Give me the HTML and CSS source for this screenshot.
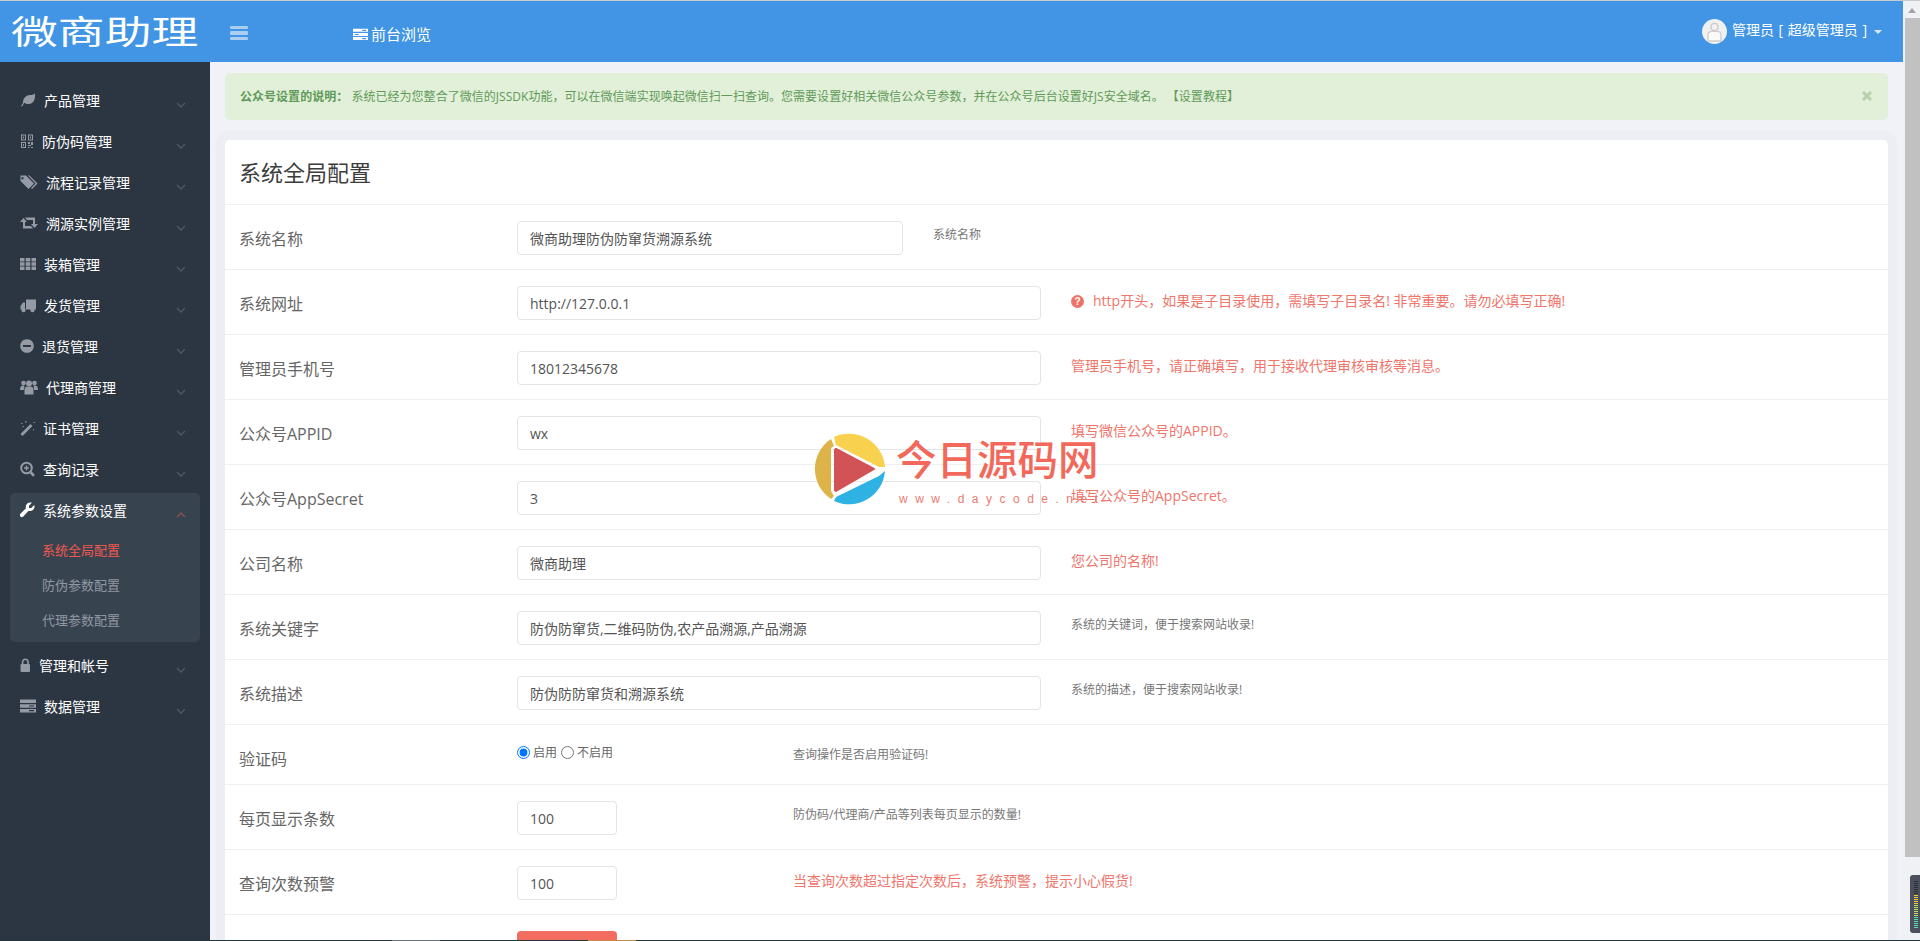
FILE: index.html
```html
<!DOCTYPE html>
<html lang="zh-CN">
<head>
    <meta charset="UTF-8">
    <title>系统全局配置</title>
    <link rel="stylesheet" href="styles.css">
</head>
<body>
<div class="window">
    <div class="main">
        <div class="header">
            <div class="logo"><span>微商助理</span></div>
            <div class="hamburger"><i></i><i></i><i></i></div>
            <a class="browse">
                <svg width="15" height="16" viewBox="0 0 16 16" fill="currentColor" fill-rule="evenodd"><path d="M0 2.5h16v3.2H0z M10 3.5h4v1.2h-4z M0 6.9h16v3.2H0z M2 8h4v1H2z M0 11.3h16v3.2H0z M10 12.3h4v1.2h-4z"/></svg>
                前台浏览
            </a>
            <div class="user">
                <svg class="avatar" width="25" height="25" viewBox="0 0 25 25"><circle cx="12.5" cy="12.5" r="12.5" fill="#f1f1f1"/><circle cx="12.5" cy="8" r="3.6" fill="none" stroke="#c9c9c9" stroke-width="1.4"/><path d="M6 22v-6c0-2.5 2-3.6 4-3.6h5c2 0 4 1.1 4 3.6v6z" fill="#fafafa" stroke="#cfcfcf" stroke-width="1.4"/></svg>
                <span class="user-name">管理员 [ 超级管理员 ]</span>
                <i class="caret"></i>
            </div>
        </div>
        <div class="body">
            <div class="sidebar">
                <ul class="menu">
                    <li class="menu-item">
                        <svg width="16" height="16" viewBox="0 0 16 16" fill="currentColor"><path d="M1 14.5c.3-1.2 1-2.4 2-3.5C2.6 6 6.5 3 10 3c2.5 0 4-.6 5-1.5.4 4.5-.6 10.5-6.5 10.5-1.8 0-3.2-.4-4.3-1.2-.7.9-1.2 1.9-1.4 3z"/></svg>
                        <span>产品管理</span>
                        <svg class="chevron" width="10" height="6" viewBox="0 0 10 6"><polyline points="1,1 5,5 9,1"/></svg>
                    </li>
                    <li class="menu-item">
                        <svg width="14" height="16" viewBox="0 0 14 16" fill="currentColor" fill-rule="evenodd"><path d="M1 1.5h5v6H1z M2 2.5v4h3v-4z M3 3.5h1v2H3z M8 1.5h5v6H8z M9 2.5v4h3v-4z M10 3.5h1v2h-1z M1 9h5v6H1z M2 10v4h3v-4z M3 11h1v2H3z M8 9h2v2H8z M11 9h2v3h-2z M8 12h3v1H8z M8 14h1.500v1H8z M11 14h2v1h-2z"/></svg>
                        <span>防伪码管理</span>
                        <svg class="chevron" width="10" height="6" viewBox="0 0 10 6"><polyline points="1,1 5,5 9,1"/></svg>
                    </li>
                    <li class="menu-item">
                        <svg width="18" height="16" viewBox="0 0 18 16" fill="currentColor" fill-rule="evenodd"><path d="M.5 1.500h5.500l8 8-5.500 5.500-8-8z M2.500 3a1.200 1.200 0 1 0 .01 0z M8 1.500h1.500l8 8-5.500 5.500-1-1 4.500-4.500z"/></svg>
                        <span>流程记录管理</span>
                        <svg class="chevron" width="10" height="6" viewBox="0 0 10 6"><polyline points="1,1 5,5 9,1"/></svg>
                    </li>
                    <li class="menu-item">
                        <svg width="18" height="16" viewBox="0 0 18 16" fill="currentColor"><path d="M3.500 3L7 7H5v4h6l2 2.500H3V7H0z"/><path d="M14.500 13L11 9h2V5H7L5 2.500h10V9h3z"/></svg>
                        <span>溯源实例管理</span>
                        <svg class="chevron" width="10" height="6" viewBox="0 0 10 6"><polyline points="1,1 5,5 9,1"/></svg>
                    </li>
                    <li class="menu-item">
                        <svg width="16" height="16" viewBox="0 0 16 16" fill="currentColor"><path d="M0 2h4.500v3.500H0z M5.700 2h4.600v3.500H5.700z M11.500 2H16v3.500h-4.500z M0 6.300h4.500v3.500H0z M5.700 6.300h4.600v3.500H5.700z M11.500 6.300H16v3.500h-4.500z M0 10.600h4.500v3.500H0z M5.700 10.600h4.600v3.500H5.700z M11.500 10.600H16v3.500h-4.500z"/></svg>
                        <span>装箱管理</span>
                        <svg class="chevron" width="10" height="6" viewBox="0 0 10 6"><polyline points="1,1 5,5 9,1"/></svg>
                    </li>
                    <li class="menu-item">
                        <svg width="16" height="16" viewBox="0 0 16 16" fill="currentColor"><path d="M6 2.500h10v10H6z"/><path d="M5 5.500v7H.5V9L3 5.500z"/><circle cx="3.500" cy="13" r="2.200"/><circle cx="12.500" cy="13" r="2.200"/></svg>
                        <span>发货管理</span>
                        <svg class="chevron" width="10" height="6" viewBox="0 0 10 6"><polyline points="1,1 5,5 9,1"/></svg>
                    </li>
                    <li class="menu-item">
                        <svg width="14" height="16" viewBox="0 0 14 16" fill="currentColor" fill-rule="evenodd"><path d="M7 1.200a6.800 6.800 0 1 0 .01 0z M3 7h8v2H3z"/></svg>
                        <span>退货管理</span>
                        <svg class="chevron" width="10" height="6" viewBox="0 0 10 6"><polyline points="1,1 5,5 9,1"/></svg>
                    </li>
                    <li class="menu-item">
                        <svg width="18" height="16" viewBox="0 0 18 16" fill="currentColor"><circle cx="3.500" cy="4" r="2.300"/><circle cx="14.500" cy="4" r="2.300"/><circle cx="9" cy="4.500" r="3"/><path d="M0 11c0-3 1-4.500 3-4.500h1.500L3.800 11z M18 11c0-3-1-4.500-3-4.500h-1.500l.7 4.500z M4.500 15.500V10.500c0-2 1.500-3 3-3h3c1.500 0 3 1 3 3v5z"/></svg>
                        <span>代理商管理</span>
                        <svg class="chevron" width="10" height="6" viewBox="0 0 10 6"><polyline points="1,1 5,5 9,1"/></svg>
                    </li>
                    <li class="menu-item">
                        <svg width="15" height="16" viewBox="0 0 15 16" fill="currentColor"><path d="M.5 14l10-10 2 2-10 10z"/><path d="M1 3h1.500v1H1z M5 1h1.500v1.500H5z M2.500 6H4v1H2.500z M13 9h1v1.500h-1z M13.500 2H15v1h-1.500z" opacity=".8"/></svg>
                        <span>证书管理</span>
                        <svg class="chevron" width="10" height="6" viewBox="0 0 10 6"><polyline points="1,1 5,5 9,1"/></svg>
                    </li>
                    <li class="menu-item">
                        <svg width="15" height="16" viewBox="0 0 15 16" fill="none" stroke="currentColor"><circle cx="6.500" cy="7" r="5.300" stroke-width="2"/><path d="M4 7h5M6.500 4.500v5" stroke-width="1.500"/><path d="M10.500 11l3.500 3.800" stroke-width="2.600"/></svg>
                        <span>查询记录</span>
                        <svg class="chevron" width="10" height="6" viewBox="0 0 10 6"><polyline points="1,1 5,5 9,1"/></svg>
                    </li>
                    <li class="menu-panel">
                        <div class="menu-item menu-item-open">
                            <svg width="15" height="16" viewBox="0 0 15 16" fill="currentColor"><path d="M14.500 4.500c0 2.500-2 4.500-4.500 4.500-.5 0-1-.1-1.400-.2L3.300 14.600c-.8.8-2.100.8-2.900 0s-.8-2.100 0-2.900L6 6.300C5.800 5.900 5.700 5.400 5.700 5c0-2.500 2-4.500 4.500-4.500.6 0 1.200.1 1.700.3L9 3.700V6h2.300l2.900-2.900c.2.500.3.900.3 1.400z"/></svg>
                            <span>系统参数设置</span>
                            <svg class="chevron" width="10" height="6" viewBox="0 0 10 6"><polyline points="1,5 5,1 9,5"/></svg>
                        </div>
                        <ul class="submenu">
                            <li class="active">系统全局配置</li>
                            <li>防伪参数配置</li>
                            <li>代理参数配置</li>
                        </ul>
                    </li>
                    <li class="menu-item">
                        <svg width="11" height="16" viewBox="0 0 11 16" fill="currentColor"><rect x=".5" y="7" width="9.500" height="8" rx="1"/><path d="M2.600 7V5a2.700 2.700 0 0 1 5.400 0v2" fill="none" stroke="currentColor" stroke-width="1.600"/></svg>
                        <span>管理和帐号</span>
                        <svg class="chevron" width="10" height="6" viewBox="0 0 10 6"><polyline points="1,1 5,5 9,1"/></svg>
                    </li>
                    <li class="menu-item">
                        <svg width="16" height="16" viewBox="0 0 16 16" fill="currentColor" fill-rule="evenodd"><path d="M0 1.500h16v3.600H0z M0 6.200h16v3.600H0z M9 7.400h5v1.200H9z M0 10.900h16v3.600H0z M9 12.100h5v1.200H9z"/></svg>
                        <span>数据管理</span>
                        <svg class="chevron" width="10" height="6" viewBox="0 0 10 6"><polyline points="1,1 5,5 9,1"/></svg>
                    </li>
                </ul>
            </div>
            <div class="content">
                <div class="alert">
                    <b>公众号设置的说明：</b> 系统已经为您整合了微信的JSSDK功能，可以在微信端实现唤起微信扫一扫查询。您需要设置好相关微信公众号参数，并在公众号后台设置好JS安全域名。<a class="alert-link">【设置教程】</a>
                    <svg class="alert-close" width="10" height="10" viewBox="0 0 10 10"><path d="M1 1l8 8M9 1l-8 8"/></svg>
                </div>
                <div class="card">
                    <div class="card-title">系统全局配置</div>
                    <div class="row">
                        <label>系统名称</label>
                        <div class="field field-mid"><input type="text" value="微商助理防伪防窜货溯源系统"></div>
                        <span class="hint">系统名称</span>
                    </div>
                    <div class="row">
                        <label>系统网址</label>
                        <div class="field"><input type="text" value="http://127.0.0.1"></div>
                        <span class="hint hint-red"><i class="help">?</i>http开头，如果是子目录使用，需填写子目录名! 非常重要。请勿必填写正确!</span>
                    </div>
                    <div class="row">
                        <label>管理员手机号</label>
                        <div class="field"><input type="text" value="18012345678"></div>
                        <span class="hint hint-red">管理员手机号，请正确填写，用于接收代理审核审核等消息。</span>
                    </div>
                    <div class="row">
                        <label>公众号APPID</label>
                        <div class="field"><input type="text" value="wx"></div>
                        <span class="hint hint-red">填写微信公众号的APPID。</span>
                    </div>
                    <div class="row">
                        <label>公众号AppSecret</label>
                        <div class="field"><input type="text" value="3"></div>
                        <span class="hint hint-red">填写公众号的AppSecret。</span>
                    </div>
                    <div class="row">
                        <label>公司名称</label>
                        <div class="field"><input type="text" value="微商助理"></div>
                        <span class="hint hint-red">您公司的名称!</span>
                    </div>
                    <div class="row">
                        <label>系统关键字</label>
                        <div class="field"><input type="text" value="防伪防窜货,二维码防伪,农产品溯源,产品溯源"></div>
                        <span class="hint">系统的关键词，便于搜索网站收录!</span>
                    </div>
                    <div class="row">
                        <label>系统描述</label>
                        <div class="field"><input type="text" value="防伪防防窜货和溯源系统"></div>
                        <span class="hint">系统的描述，便于搜索网站收录!</span>
                    </div>
                    <div class="row row-radio">
                        <label>验证码</label>
                        <div class="field field-small radios">
                            <input type="radio" name="captcha" checked><span>启用</span>
                            <input type="radio" name="captcha"><span>不启用</span>
                        </div>
                        <span class="hint">查询操作是否启用验证码!</span>
                    </div>
                    <div class="row">
                        <label>每页显示条数</label>
                        <div class="field field-small"><input class="input-small" type="text" value="100"></div>
                        <span class="hint">防伪码/代理商/产品等列表每页显示的数量!</span>
                    </div>
                    <div class="row">
                        <label>查询次数预警</label>
                        <div class="field field-small"><input class="input-small" type="text" value="100"></div>
                        <span class="hint hint-red">当查询次数超过指定次数后，系统预警，提示小心假货!</span>
                    </div>
                    <div class="row row-last">
                        <label></label>
                        <div class="field"><button class="btn-submit" type="button"></button></div>
                    </div>
                </div>
            </div>
        </div>
    </div>
    <div class="scrollbar">
        <i class="scroll-arrow"></i>
        <div class="scroll-thumb"></div>
    </div>
</div>

<!-- 水印 -->
<div class="watermark">
    <svg width="74" height="74" viewBox="0 0 74 74">
        <path d="M22 5A36 36 0 0 1 73 35H67L24 13z" fill="#f8d14f"/>
        <path d="M73 39A36 36 0 0 1 22 69L24 65 67 44z" fill="#2eb2e3"/>
        <path d="M19 7L22 14 19 16V59L22 64 19 67A36 36 0 0 1 19 7z" fill="#dcae3c" opacity=".93"/>
        <path d="M24 17 62 37 24 59a1.500 1.500 0 0 1-1-2V19a1.500 1.500 0 0 1 1-2z" fill="#d04a4c" opacity=".95" stroke="#d04a4c" stroke-width="2" stroke-linejoin="round"/>
    </svg>
    <div class="watermark-text">
        <strong>今日源码网</strong>
        <small>www.daycode.net</small>
    </div>
</div>

<!-- 音量条 -->
<div class="meter"><i></i></div>
<div class="taskline"></div>
</body>
</html>
```

FILE: styles.css
```css
* {
    box-sizing: border-box;
}
html, body {
    height: 941px;
    margin: 0;
    overflow: hidden;
}
body {
    font-family: "Open Sans", "Noto Sans CJK SC", sans-serif;
    font-size: 14px;
    background: #f0f2f7;
    color: #555;
    border-top: 1px solid #c6cbd0;
    position: relative;
}
ul {
    list-style: none;
    margin: 0;
    padding: 0;
}
.window {
    display: flex;
    height: 940px;
}
.main {
    flex: 1;
    min-width: 0;
    display: flex;
    flex-direction: column;
}

/* 顶部 */
.header {
    height: 61px;
    flex: none;
    background: #4195e4;
    color: #fff;
    display: flex;
    align-items: center;
    padding-right: 21px;
}
.logo {
    width: 230px;
    padding-left: 11px;
    font-size: 33px;
    line-height: 40px;
    margin-top: 1px;
}
.logo span {
    display: inline-block;
    white-space: nowrap;
    transform: scaleX(1.42);
    transform-origin: left center;
}
.hamburger {
    width: 18px;
    margin-right: 105px;
    display: flex;
    flex-direction: column;
    gap: 2px;
    margin-top: 3px;
}
.hamburger i {
    height: 3.500px;
    background: #aacdf2;
    border-radius: 1px;
}
.browse {
    display: flex;
    align-items: center;
    gap: 3px;
    font-size: 15px;
    margin-top: 4px;
}
.user {
    margin-left: auto;
    display: flex;
    align-items: center;
    gap: 4px;
    margin-top: -1px;
}
.avatar {
    margin-right: 1px;
}
.user-name {
    word-spacing: 1px;
    margin-top: -4px;
}
.caret {
    width: 0;
    height: 0;
    margin-left: 3px;
    margin-top: 2px;
    border-left: 4px solid transparent;
    border-right: 4px solid transparent;
    border-top: 4px solid #d8e8f8;
}
.body {
    flex: 1;
    display: flex;
    min-height: 0;
}

/* 左侧菜单 */
.sidebar {
    width: 210px;
    flex: none;
    background: #2c3542;
    padding-top: 18px;
}
.menu-item {
    display: flex;
    align-items: center;
    height: 41px;
    padding-left: 20px;
    color: #fff;
    cursor: pointer;
}
.menu-item > span {
    margin-top: -2px;
}
.menu-item > svg:first-child {
    color: #959ba4;
    margin-right: 8px;
    flex: none;
    margin-top: -2px;
}
.chevron {
    margin-left: auto;
    margin-right: 24px;
    margin-top: 8px;
    fill: none;
    stroke: #4d5967;
    stroke-width: 1.3;
}
.menu-panel {
    margin: 3px 10px;
    height: 149px;
    background: #384350;
    border-radius: 5px;
}
.menu-item-open {
    height: 36px;
    padding-left: 10px;
}
.menu-item-open > svg:first-child {
    color: #fff;
}
.menu-item-open .chevron {
    margin-right: 14px;
    stroke: #8b4f4f;
}
.submenu {
    padding-top: 4px;
}
.submenu li {
    height: 35px;
    line-height: 35px;
    padding-left: 32px;
    font-size: 13px;
    color: #8f97a2;
}
.submenu .active {
    color: #f0584f;
}

/* 内容区 */
.content {
    flex: 1;
    min-width: 0;
    padding: 11px 15px 0;
    overflow: hidden;
    background: #f0f2f7;
}
.alert {
    height: 47px;
    background: #e2efd9;
    border-radius: 5px;
    color: #5f9a58;
    font-size: 12px;
    line-height: 47px;
    letter-spacing: .03px;
    padding-left: 15px;
    margin-bottom: 20px;
    position: relative;
    white-space: nowrap;
}
.alert-link {
    margin-left: 9px;
}
.alert-close {
    position: absolute;
    right: 16px;
    top: 18px;
    fill: none;
    stroke: #b7d0ab;
    stroke-width: 3;
}
.card {
    background: #fff;
    border-radius: 5px;
    box-shadow: 0 0 0 9px #edeef4;
}
.card-title {
    height: 65px;
    padding: 16px 14px 0;
    font-size: 22px;
    line-height: 32px;
    color: #3d3d3d;
    border-bottom: 1px solid #eff0f5;
    margin-bottom: -1px;
}
.row {
    display: flex;
    align-items: flex-start;
    height: 65px;
    padding: 16px 0 0 14px;
    border-top: 1px solid #eff0f5;
}
.row-radio {
    height: 60px;
}
.row-last {
    height: 80px;
}
.row label {
    width: 278px;
    flex: none;
    font-size: 16px;
    line-height: 34px;
    margin-top: 1px;
    color: #666;
}
.field {
    width: 524px;
    flex: none;
}
.field-mid {
    width: 386px;
}
.field-small {
    width: 246px;
}
input[type="text"] {
    display: block;
    width: 100%;
    height: 34px;
    padding: 0 12px;
    font: 14px "Open Sans", "Noto Sans CJK SC", sans-serif;
    color: #555;
    border: 1px solid #e3e4e8;
    border-radius: 4px;
    background: #fff;
}
input.input-small {
    width: 100px;
}
.radios {
    display: flex;
    align-items: center;
    font-size: 12px;
    height: 22px;
    color: #666;
}
.radios input {
    width: 13px;
    height: 13px;
    margin: 0 3px 0 0;
}
.radios span {
    margin-right: 4px;
}
.hint {
    margin-left: 30px;
    font-size: 12px;
    line-height: 17px;
    margin-top: 5px;
    color: #777;
    white-space: nowrap;
}
.hint-red {
    font-size: 14px;
    line-height: 20px;
    margin-top: 5px;
    color: #f0756b;
    display: flex;
    align-items: center;
}
.help {
    width: 13px;
    height: 13px;
    margin-right: 9px;
    border-radius: 50%;
    background: #ee7268;
    color: #fff;
    font: bold 10px/13px "Liberation Sans", sans-serif;
    text-align: center;
}
.btn-submit {
    display: block;
    width: 100px;
    height: 34px;
    border: 0;
    border-radius: 4px;
    background: #f36c60;
}

/* 滚动条 */
.scrollbar {
    width: 17px;
    flex: none;
    background: #f0f1f5;
    position: relative;
}
.scroll-arrow {
    position: absolute;
    left: 5px;
    top: 7px;
    border-left: 4px solid transparent;
    border-right: 4px solid transparent;
    border-bottom: 5px solid #a3a3a3;
}
.scroll-thumb {
    position: absolute;
    left: 2px;
    right: 0;
    top: 17px;
    height: 839px;
    background: #c1c1c1;
}

/* 浮在页面上的水印 */
.watermark {
    position: absolute;
    left: 812px;
    top: 431px;
    display: flex;
    gap: 10px;
    pointer-events: none;
}
.watermark-text {
    display: flex;
    flex-direction: column;
}
.watermark-text strong {
    font-family: "Noto Sans CJK SC", sans-serif;
    font-size: 40.500px;
    line-height: 52px;
    color: #f2695c;
    font-weight: 500;
}
.watermark-text small {
    font-family: "Liberation Sans", sans-serif;
    font-size: 12px;
    letter-spacing: 7.500px;
    color: #ec7a70;
    line-height: 14px;
    margin-top: 8px;
    padding-left: 3px;
    white-space: nowrap;
}
.meter {
    position: absolute;
    left: 1910px;
    top: 874px;
    width: 10px;
    height: 58px;
    background: #4c505c;
    border-radius: 3px 0 0 3px;
    padding: 6px 2px 4px 4px;
}
.meter i {
    display: block;
    height: 100%;
    background:
        repeating-linear-gradient(to bottom, transparent 0 1px, #4c505c 1px 2px),
        linear-gradient(to bottom, #2c2f38 0 30%, #f5c93e 30% 48%, #bfe05a 48% 72%, #54e0a8 72% 100%);
}
.taskline {
    position: absolute;
    left: 0;
    right: 0;
    bottom: 0;
    height: 1px;
    background: linear-gradient(to right, #24363c 0 392px, #6a7478 392px 440px, #24363c 440px 588px, #c98a45 588px 636px, #24363c 636px);
}
```
